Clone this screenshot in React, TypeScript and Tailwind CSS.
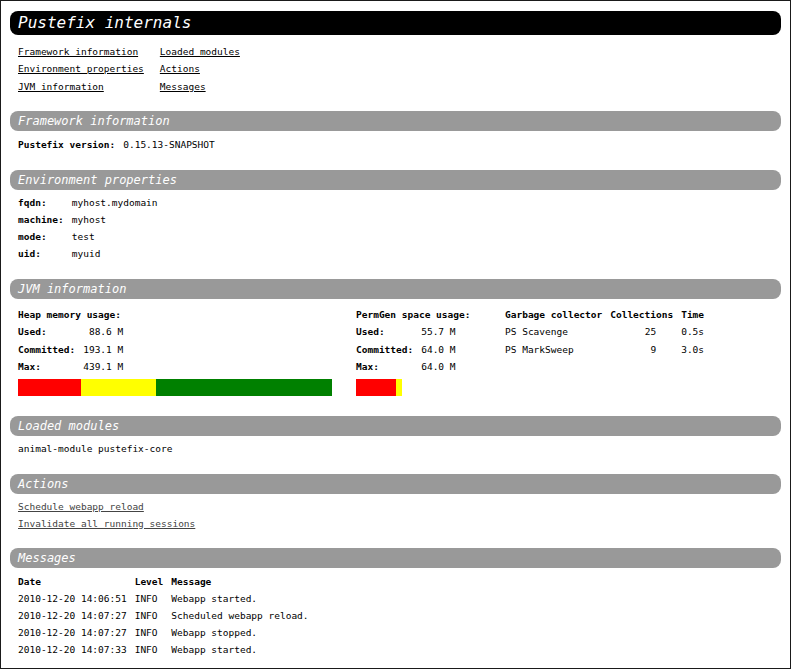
// Pustefix internals status page: framework info, env, JVM memory, modules, actions, log.

const MONO = "font-['DejaVu_Sans_Mono',monospace]";

const NAV = [
  ["Framework information", "Loaded modules"],
  ["Environment properties", "Actions"],
  ["JVM information", "Messages"],
];

const ENV = [
  ["fqdn:", "myhost.mydomain"],
  ["machine:", "myhost"],
  ["mode:", "test"],
  ["uid:", "myuid"],
];

const MESSAGES = [
  ["2010-12-20 14:06:51", "INFO", "Webapp started."],
  ["2010-12-20 14:07:27", "INFO", "Scheduled webapp reload."],
  ["2010-12-20 14:07:27", "INFO", "Webapp stopped."],
  ["2010-12-20 14:07:33", "INFO", "Webapp started."],
];

function SectionHeader({ title, className = "" }: { title: string; className?: string }) {
  return (
    <div
      className={`h-[20px] rounded-[8px] bg-[#999999] pl-2 text-[12px] leading-[20px] italic text-white ${className}`}
    >
      {title}
    </div>
  );
}

function MemoryTable({
  title,
  rows,
}: {
  title: string;
  rows: [string, string][];
}) {
  return (
    <div>
      <div className="h-[17.67px] leading-[17.67px] font-bold">{title}</div>
      <div className="grid w-max grid-cols-[auto_auto] gap-x-2">
        {rows.map(([k, v]) => (
          <div key={k} className="contents">
            <div className="h-[17.67px] leading-[17.67px] font-bold">{k}</div>
            <div className="h-[17.67px] text-right leading-[17.67px]">{v}</div>
          </div>
        ))}
      </div>
    </div>
  );
}

export default function App() {
  return (
    <div className={`box-border h-[669px] w-[791px] overflow-hidden border border-[#1a1a1a] bg-white px-[9px] text-[9.5px] text-black ${MONO}`}>
      {/* Title */}
      <div className="mt-[10px] h-[24px] rounded-[8px] bg-black pl-2 text-[16px] leading-[24px] italic text-white">
        Pustefix internals
      </div>

      {/* Nav */}
      <div className="mt-[7.5px] grid w-max grid-cols-[auto_auto] gap-x-4 pl-2">
        {NAV.map(([a, b]) => (
          <div key={a} className="contents">
            <a className="h-[17.5px] leading-[17.5px] underline">{a}</a>
            <a className="h-[17.5px] leading-[17.5px] underline">{b}</a>
          </div>
        ))}
      </div>

      {/* Framework */}
      <SectionHeader title="Framework information" className="mt-[16px]" />
      <div className="mt-[4.5px] flex h-[17px] gap-2 pl-2 leading-[17px]">
        <span className="font-bold">Pustefix version:</span>
        <span>0.15.13-SNAPSHOT</span>
      </div>

      {/* Environment */}
      <SectionHeader title="Environment properties" className="mt-[17.5px]" />
      <div className="mt-[3.5px] grid w-max grid-cols-[auto_auto] gap-x-2 pl-2">
        {ENV.map(([k, v]) => (
          <div key={k} className="contents">
            <div className="h-[17px] leading-[17px] font-bold">{k}</div>
            <div className="h-[17px] leading-[17px]">{v}</div>
          </div>
        ))}
      </div>

      {/* JVM */}
      <SectionHeader title="JVM information" className="mt-[17.5px]" />
      <div className="mt-[6.5px] flex pl-2">
        <div className="w-[338px]">
          <MemoryTable
            title="Heap memory usage:"
            rows={[
              ["Used:", "88.6 M"],
              ["Committed:", "193.1 M"],
              ["Max:", "439.1 M"],
            ]}
          />
          <div className="mt-[3px] flex h-[17px] w-[314px]">
            <div className="w-[63px] bg-[#ff0000]" />
            <div className="w-[75px] bg-[#ffff00]" />
            <div className="flex-1 bg-[#008000]" />
          </div>
        </div>
        <div className="w-[149px]">
          <MemoryTable
            title="PermGen space usage:"
            rows={[
              ["Used:", "55.7 M"],
              ["Committed:", "64.0 M"],
              ["Max:", "64.0 M"],
            ]}
          />
          <div className="mt-[3px] flex h-[17px] w-[46px]">
            <div className="w-[40px] bg-[#ff0000]" />
            <div className="flex-1 bg-[#ffff00]" />
          </div>
        </div>
        <div className="grid h-max grid-cols-[auto_auto_auto] gap-x-2">
          <div className="h-[17.67px] leading-[17.67px] font-bold">Garbage collector</div>
          <div className="h-[17.67px] leading-[17.67px] font-bold">Collections</div>
          <div className="h-[17.67px] leading-[17.67px] font-bold">Time</div>
          <div className="h-[17.67px] leading-[17.67px]">PS Scavenge</div>
          <div className="h-[17.67px] pr-[17px] text-right leading-[17.67px]">25</div>
          <div className="h-[17.67px] leading-[17.67px]">0.5s</div>
          <div className="h-[17.67px] leading-[17.67px]">PS MarkSweep</div>
          <div className="h-[17.67px] pr-[17px] text-right leading-[17.67px]">9</div>
          <div className="h-[17.67px] leading-[17.67px]">3.0s</div>
        </div>
      </div>

      {/* Modules */}
      <SectionHeader title="Loaded modules" className="mt-[20px]" />
      <div className="mt-[3.5px] h-[17px] pl-2 leading-[17px]">animal-module pustefix-core</div>

      {/* Actions */}
      <SectionHeader title="Actions" className="mt-[17.5px]" />
      <div className="mt-[3.5px] flex flex-col pl-2 text-[#444444]">
        <a className="h-[17px] w-max leading-[17px] underline">Schedule webapp reload</a>
        <a className="h-[17px] w-max leading-[17px] underline">Invalidate all running sessions</a>
      </div>

      {/* Messages */}
      <SectionHeader title="Messages" className="mt-[16.5px]" />
      <div className="mt-[4.5px] grid w-max grid-cols-[auto_auto_auto] gap-x-2 pl-2">
        <div className="h-[17px] leading-[17px] font-bold">Date</div>
        <div className="h-[17px] leading-[17px] font-bold">Level</div>
        <div className="h-[17px] leading-[17px] font-bold">Message</div>
        {MESSAGES.map(([d, l, m], i) => (
          <div key={i} className="contents">
            <div className="h-[17px] leading-[17px]">{d}</div>
            <div className="h-[17px] leading-[17px]">{l}</div>
            <div className="h-[17px] leading-[17px]">{m}</div>
          </div>
        ))}
      </div>
    </div>
  );
}
